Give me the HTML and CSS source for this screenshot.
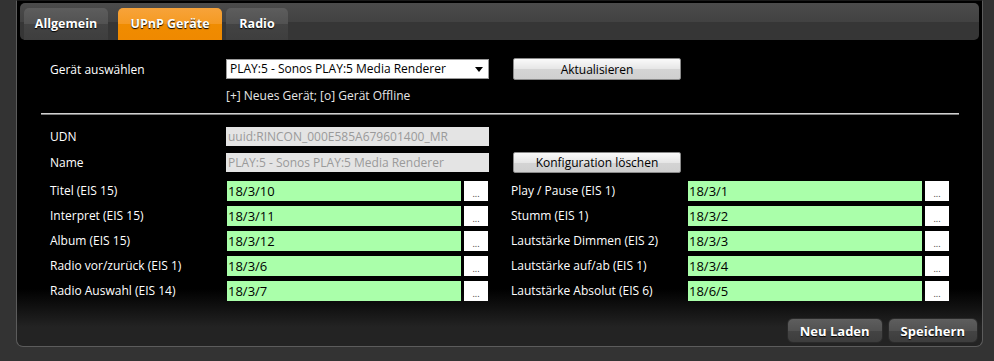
FILE: index.html
```html
<!DOCTYPE html>
<html lang="de">
<head>
  <meta charset="UTF-8">
  <title>UPnP Geräte</title>
  <link rel="stylesheet" href="styles.css">
</head>
<body>
  <div class="window">
    <div class="tabbar">
      <div class="tab t-general">Allgemein</div>
      <div class="tab t-upnp active">UPnP Geräte</div>
      <div class="tab t-radio">Radio</div>
    </div>

    <div class="content">
      <div class="toprow">
        <label>Gerät auswählen</label>
        <div class="select">PLAY:5 - Sonos PLAY:5 Media Renderer<span class="arrow"></span></div>
        <button class="btn">Aktualisieren</button>
      </div>
      <div class="note">[+] Neues Gerät; [o] Gerät Offline</div>
      <div class="sep"></div>

      <div class="toprow info udn">
        <label>UDN</label>
        <input class="ro" type="text" value="uuid:RINCON_000E585A679601400_MR" disabled>
      </div>
      <div class="toprow info name">
        <label>Name</label>
        <input class="ro" type="text" value="PLAY:5 - Sonos PLAY:5 Media Renderer" disabled>
        <button class="btn">Konfiguration löschen</button>
      </div>

      <div class="fields">
        <div class="col">
          <label>Titel (EIS 15)</label><input class="ga" type="text" value="18/3/10"><button class="dots">...</button>
          <label>Interpret (EIS 15)</label><input class="ga" type="text" value="18/3/11"><button class="dots">...</button>
          <label>Album (EIS 15)</label><input class="ga" type="text" value="18/3/12"><button class="dots">...</button>
          <label>Radio vor/zurück (EIS 1)</label><input class="ga" type="text" value="18/3/6"><button class="dots">...</button>
          <label>Radio Auswahl (EIS 14)</label><input class="ga" type="text" value="18/3/7"><button class="dots">...</button>
        </div>
        <div class="col">
          <label>Play / Pause (EIS 1)</label><input class="ga" type="text" value="18/3/1"><button class="dots">...</button>
          <label>Stumm (EIS 1)</label><input class="ga" type="text" value="18/3/2"><button class="dots">...</button>
          <label>Lautstärke Dimmen (EIS 2)</label><input class="ga" type="text" value="18/3/3"><button class="dots">...</button>
          <label>Lautstärke auf/ab (EIS 1)</label><input class="ga" type="text" value="18/3/4"><button class="dots">...</button>
          <label>Lautstärke Absolut (EIS 6)</label><input class="ga" type="text" value="18/6/5"><button class="dots">...</button>
        </div>
      </div>
    </div>

    <div class="footer">
      <button class="dark">Neu Laden</button>
      <button class="dark">Speichern</button>
    </div>
  </div>
</body>
</html>
```

FILE: styles.css
```css
body { margin: 0; background: #333; font-family: "Open Sans", "DejaVu Sans", sans-serif; font-size: 12px; color: #fff; }

.window { margin-left: 16px; width: 967px; height: 347px; box-sizing: border-box; padding: 2px 3px 3px 3px; border: 1px solid #5c5c5c; border-top-color: #1a1a1a; border-radius: 0 0 7px 7px; background: linear-gradient(#000 0, #000 288px, #232323 326px, #232323 100%); display: flex; flex-direction: column; }

.tabbar { height: 37px; box-sizing: border-box; padding: 5px 0 0 4px; border-radius: 5px; background: linear-gradient(#4b4b4b 0, #424242 50%, #363636 51%, #363636 100%); display: flex; align-items: flex-end; gap: 4px; }
.tab { height: 32px; box-sizing: border-box; text-align: center; line-height: 32px; border-radius: 5px 5px 0 0; background: linear-gradient(#5d5d5d 0, #525252 50%, #434343 51%, #3e3e3e 100%); font-weight: bold; font-size: 12.5px; color: #fff; text-shadow: 0 1px 1px #000; white-space: nowrap; }
.t-general { width: 84px; margin-right: 6px; }
.t-upnp { width: 104px; }
.t-radio { width: 62px; }
.tab.active { background: linear-gradient(#f7a33a 0, #f59a22 50%, #f08c00 51%, #ef8900 100%); }

.content { flex: 1; padding: 18px 20px 0 30px; }

.toprow { display: grid; grid-template-columns: 176px 263px 192px; align-items: center; height: 22px; }
.toprow label { white-space: nowrap; }
.select { height: 20px; box-sizing: border-box; background: #fff; border: 1px solid #9a9a9a; color: #000; padding: 0 0 0 3px; line-height: 18px; position: relative; font-size: 12px; }
.arrow { position: absolute; right: 5px; top: 7px; border-left: 4px solid transparent; border-right: 4px solid transparent; border-top: 5px solid #000; }
.btn { height: 22px; margin-left: 24px; border: 1px solid #8a8a8a; border-radius: 2px; background: linear-gradient(#fafafa, #e6e6e6 50%, #d4d4d4 51%, #cfcfcf); font-family: inherit; font-size: 12px; color: #000; padding: 0; }

.note { margin: 8px 0 0 176px; line-height: 16px; color: #e6e6e6; }
.sep { margin: 9px 0 0 -9px; width: 918px; border-top: 1px solid #d0d0d0; border-bottom: 1px solid #7a7a7a; }

.info { height: 21px; }
.udn { margin-top: 11px; }
.name { margin-top: 5px; }
.ro { height: 19px; box-sizing: border-box; border: 0; margin: 0; padding: 0 2px; background: #e4e4e4; color: #9a9a9a; font-family: inherit; font-size: 12px; }
.info .btn { height: 21px; }

.fields { display: flex; gap: 23px; margin-top: 8px; }
.col { display: grid; grid-template-columns: 177px 234px 27px; row-gap: 5px; align-items: center; }
.col label { white-space: nowrap; line-height: 20px; }
.ga { height: 20px; box-sizing: border-box; border: 0; margin: 0; padding: 0 1px; background: #aaffaa; color: #000; font-family: inherit; font-size: 13px; }
.dots { width: 24px; height: 20px; margin-left: 3px; border: 0; padding: 4px 0 0 0; background: #fff; color: #333; font-size: 9px; font-family: inherit; }

.footer { display: flex; justify-content: flex-end; gap: 5px; padding: 0 1px 0 0; }
.dark { height: 25px; border: 1px solid #2a2a2a; border-radius: 6px; background: linear-gradient(#5e5e5e 0, #525252 50%, #444 51%, #3d3d3d 100%); color: #fff; font-family: inherit; font-weight: bold; font-size: 13px; text-shadow: 0 1px 1px #000; padding: 0 12px; }
```
